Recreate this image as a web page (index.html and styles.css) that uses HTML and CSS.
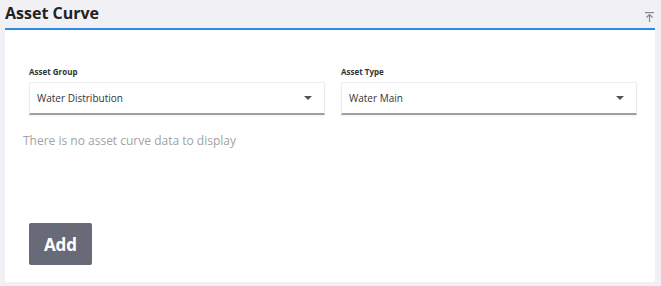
FILE: index.html
```html
<!DOCTYPE html>
<html lang="en">
<head>
    <meta charset="UTF-8">
    <title>Asset Curve</title>
    <link rel="stylesheet" href="styles.css">
</head>
<body>
    <div class="panel">
        <div class="panel-header">
            <h2 class="panel-title">Asset Curve</h2>
            <button type="button" class="collapse-btn" title="Collapse">
                <svg width="9" height="10" viewBox="0 0 9 10">
                    <rect x="0" y="0" width="9" height="1.2" fill="#8a8794"/>
                    <path d="M4.5 2.5 L1.5 5.5 M4.5 2.5 L7.5 5.5 M4.5 2.5 V10" stroke="#8a8794" stroke-width="1.2" fill="none"/>
                </svg>
            </button>
        </div>

        <div class="panel-body">
            <div class="filters">
                <div class="field">
                    <label class="field-label">Asset Group</label>
                    <div class="select">
                        <span class="select-value">Water Distribution</span>
                        <span class="select-arrow"></span>
                    </div>
                </div>
                <div class="field">
                    <label class="field-label">Asset Type</label>
                    <div class="select">
                        <span class="select-value">Water Main</span>
                        <span class="select-arrow"></span>
                    </div>
                </div>
            </div>

            <p class="empty-msg">There is no asset curve data to display</p>

            <button type="button" class="add-btn">Add</button>
        </div>
    </div>
</body>
</html>
```

FILE: styles.css
```css
* {
    margin: 0;
    padding: 0;
    box-sizing: border-box;
}

body {
    font-family: 'Open Sans', 'Liberation Sans', sans-serif;
    background: #f1f0f5;
    color: #333;
}

.panel {
    padding: 0 6px 0 5px;
}

.panel-header {
    display: flex;
    align-items: flex-end;
    justify-content: space-between;
    height: 28px;
}

.panel-title {
    font-size: 16px;
    font-weight: 700;
    color: #222;
    line-height: 22px;
    margin-bottom: 4px;
}

.collapse-btn {
    background: none;
    border: none;
    cursor: pointer;
    width: 10px;
    height: 10px;
    margin-bottom: 6px;
    display: flex;
}

.panel-body {
    background: white;
    border-top: 2px solid #2d8de4;
    height: 254px;
    padding: 36px 18px 0 24px;
}

.filters {
    display: grid;
    grid-template-columns: 296px 296px;
    column-gap: 16px;
}

.field-label {
    display: block;
    font-size: 8px;
    font-weight: 700;
    color: #333;
    margin-bottom: 5px;
    line-height: 11px;
}

.select {
    display: flex;
    align-items: center;
    justify-content: space-between;
    height: 33px;
    padding: 0 12px 0 7px;
    border: 1px solid #ececef;
    border-bottom: 2px solid #a0a0a0;
    border-radius: 2px 2px 0 0;
    box-shadow: 0 1px 2px rgba(0,0,0,0.06);
}

.select-value {
    font-size: 10px;
    color: #333;
}

.select-arrow {
    width: 0;
    height: 0;
    border-left: 4px solid transparent;
    border-right: 4px solid transparent;
    border-top: 4px solid #555;
}

.empty-msg {
    font-size: 12px;
    color: #a3a3a3;
    margin: 18px 0 0 -6px;
    line-height: 16px;
}

.add-btn {
    margin-top: 74px;
    width: 63px;
    height: 42px;
    background: #686a78;
    color: white;
    border: none;
    border-radius: 2px;
    font-family: 'Open Sans', sans-serif;
    font-size: 17px;
    font-weight: 700;
    cursor: pointer;
}
```
